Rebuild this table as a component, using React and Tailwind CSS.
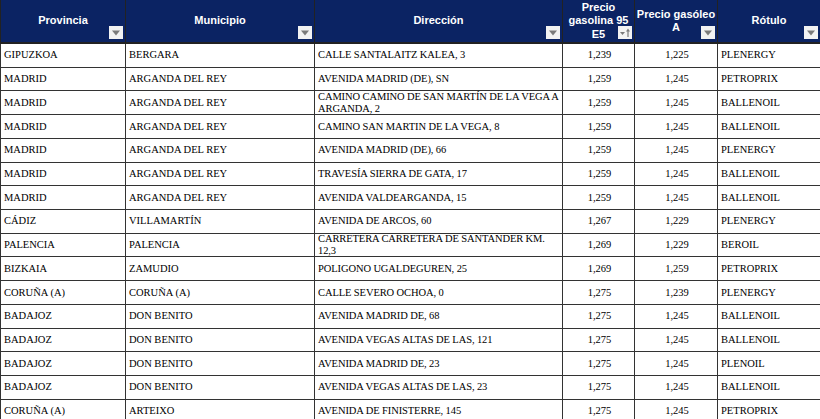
import React from 'react';

const rows = [
  ['GIPUZKOA', 'BERGARA', 'CALLE SANTALAITZ KALEA, 3', '1,239', '1,225', 'PLENERGY'],
  ['MADRID', 'ARGANDA DEL REY', 'AVENIDA MADRID (DE), SN', '1,259', '1,245', 'PETROPRIX'],
  ['MADRID', 'ARGANDA DEL REY', 'CAMINO CAMINO DE SAN MARTÍN DE LA VEGA A ARGANDA, 2', '1,259', '1,245', 'BALLENOIL'],
  ['MADRID', 'ARGANDA DEL REY', 'CAMINO SAN MARTIN DE LA VEGA, 8', '1,259', '1,245', 'BALLENOIL'],
  ['MADRID', 'ARGANDA DEL REY', 'AVENIDA MADRID (DE), 66', '1,259', '1,245', 'PLENERGY'],
  ['MADRID', 'ARGANDA DEL REY', 'TRAVESÍA SIERRA DE GATA, 17', '1,259', '1,245', 'BALLENOIL'],
  ['MADRID', 'ARGANDA DEL REY', 'AVENIDA VALDEARGANDA, 15', '1,259', '1,245', 'BALLENOIL'],
  ['CÁDIZ', 'VILLAMARTÍN', 'AVENIDA DE ARCOS, 60', '1,267', '1,229', 'PLENERGY'],
  ['PALENCIA', 'PALENCIA', 'CARRETERA CARRETERA DE SANTANDER KM. 12,3', '1,269', '1,229', 'BEROIL'],
  ['BIZKAIA', 'ZAMUDIO', 'POLIGONO UGALDEGUREN, 25', '1,269', '1,259', 'PETROPRIX'],
  ['CORUÑA (A)', 'CORUÑA (A)', 'CALLE SEVERO OCHOA, 0', '1,275', '1,239', 'PLENERGY'],
  ['BADAJOZ', 'DON BENITO', 'AVENIDA MADRID DE, 68', '1,275', '1,245', 'BALLENOIL'],
  ['BADAJOZ', 'DON BENITO', 'AVENIDA VEGAS ALTAS DE LAS, 121', '1,275', '1,245', 'BALLENOIL'],
  ['BADAJOZ', 'DON BENITO', 'AVENIDA MADRID DE, 23', '1,275', '1,245', 'PLENOIL'],
  ['BADAJOZ', 'DON BENITO', 'AVENIDA VEGAS ALTAS DE LAS, 23', '1,275', '1,245', 'BALLENOIL'],
  ['CORUÑA (A)', 'ARTEIXO', 'AVENIDA DE FINISTERRE, 145', '1,275', '1,245', 'PETROPRIX'],
];

function FilterBtn({ sorted }) {
  return (
    <span className="absolute right-[2px] bottom-[3px] flex h-[13px] w-[14px] items-center justify-center bg-[#f2f2f2]">
      {sorted ? (
        <svg width="14" height="13" viewBox="0 0 14 13">
          <path d="M2 6h5l-2.5 3z" fill="#7a7a7a" />
          <path d="M10 4v7" stroke="#7a7a7a" strokeWidth="1.2" />
          <path d="M8 5.5l2-3 2 3z" fill="#7a7a7a" />
        </svg>
      ) : (
        <svg width="10" height="6" viewBox="0 0 10 6">
          <path d="M1 0.5h8L5 5.5z" fill="#7a7a7a" />
        </svg>
      )}
    </span>
  );
}

const heads = [
  { label: 'Provincia', w: 'w-[125px]' },
  { label: 'Municipio', w: 'w-[189px]' },
  { label: 'Dirección', w: 'w-[248px]' },
  { label: <>Precio<br />gasolina 95<br />E5</>, w: 'w-[72px]', sorted: true },
  { label: <>Precio gasóleo<br />A</>, w: 'w-[83px]' },
  { label: 'Rótulo', w: 'w-[103px]' },
];

export default function App() {
  return (
    <div className="h-[419px] w-[820px] overflow-hidden bg-white">
      <table className="w-[820px] table-fixed border-collapse">
        <thead>
          <tr className="bg-[#0b2363]">
            {heads.map((h, i) => (
              <th
                key={i}
                className={`${h.w} relative h-[43px] border-x border-b-2 border-[#222] p-0 text-center align-middle text-[11px] font-bold leading-[13.5px] text-white font-['Liberation_Sans',Arial,sans-serif]`}
              >
                {h.label}
                <FilterBtn sorted={h.sorted} />
              </th>
            ))}
          </tr>
        </thead>
        <tbody className="font-['Liberation_Serif','Times_New_Roman',serif] text-[10.5px] text-black">
          {rows.map((r, i) => (
            <tr key={i}>
              {r.map((c, j) => (
                <td key={j} className="border border-[#333] p-0 align-middle">
                  <div
                    className={`flex h-[22.73px] items-center overflow-hidden pl-[3px] pr-[1px] leading-[12px] ${j === 3 || j === 4 ? 'justify-center text-center' : ''} ${j === 2 ? 'tracking-[-0.1px]' : ''}`}
                  >
                    <span>{c}</span>
                  </div>
                </td>
              ))}
            </tr>
          ))}
        </tbody>
      </table>
    </div>
  );
}
